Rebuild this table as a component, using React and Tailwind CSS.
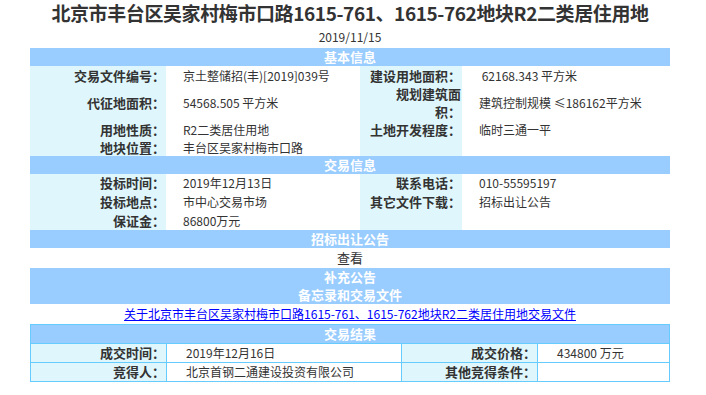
import React from 'react'

const label = 'flex items-center justify-end bg-[#dff7fc] text-[13px] font-bold text-[#333] leading-[18px] text-right pr-[1px]'
const value = 'flex items-center bg-white text-[12px] text-[#333] pl-[17px] whitespace-nowrap'

function Bar({ children, className = '' }) {
  return (
    <div className={`flex h-[18px] items-center justify-center bg-[#99ccff] text-[13px] font-bold text-white ${className}`}>
      {children}
    </div>
  )
}

export default function App() {
  return (
    <div className="min-h-[395px] bg-white pt-[1px] font-['Noto_Sans_CJK_SC',sans-serif] text-[#333]">
      <div className="ml-[30px] w-[640px]">
        <h1 className="h-[25px] text-center text-[19px] leading-[24px] font-bold tracking-[-0.4px] whitespace-nowrap">
          北京市丰台区吴家村梅市口路1615-761、1615-762地块R2二类居住用地
        </h1>
        <p className="h-[22px] pt-[2px] text-center text-[12px] leading-[18px]">2019/11/15</p>

        <Bar>基本信息</Bar>
        <div className="grid grid-cols-[136px_194px_102px_208px] grid-rows-[19px_36px_18px_17px]">
          <div className={label}>交易文件编号：</div>
          <div className={value}>京土整储招(丰)[2019]039号</div>
          <div className={label}>建设用地面积：</div>
          <div className={value}>&nbsp;62168.343 平方米</div>

          <div className={label}>代征地面积：</div>
          <div className={value}>54568.505 平方米</div>
          <div className={label}>
            <span>规划建筑面<br />积：</span>
          </div>
          <div className={value}>建筑控制规模 ≤186162平方米</div>

          <div className={label}>用地性质：</div>
          <div className={value}>R2二类居住用地</div>
          <div className={label}>土地开发程度：</div>
          <div className={value}>临时三通一平</div>

          <div className={label}>地块位置：</div>
          <div className={value}>丰台区吴家村梅市口路</div>
          <div className={label}></div>
          <div className={value}></div>
        </div>

        <Bar>交易信息</Bar>
        <div className="grid grid-cols-[136px_194px_102px_208px] grid-rows-[18px_19px_19px]">
          <div className={label}>投标时间：</div>
          <div className={value}>2019年12月13日</div>
          <div className={label}>联系电话：</div>
          <div className={value}>010-55595197</div>

          <div className={label}>投标地点：</div>
          <div className={value}>市中心交易市场</div>
          <div className={label}>其它文件下载：</div>
          <div className={value}>招标出让公告</div>

          <div className={label}>保证金：</div>
          <div className={value}>86800万元</div>
          <div className={label}></div>
          <div className={value}></div>
        </div>

        <Bar>招标出让公告</Bar>
        <div className="flex h-[20px] items-center justify-center text-[13px]">查看</div>
        <div className="flex h-[36px] flex-col bg-[#99ccff] text-[13px] font-bold text-white">
          <div className="flex h-[18px] items-center justify-center">补充公告</div>
          <div className="flex h-[18px] items-center justify-center">备忘录和交易文件</div>
        </div>
        <div className="flex h-[20px] items-center justify-center">
          <a href="#" className="text-[12px] text-[#0000ff] underline whitespace-nowrap">
            关于北京市丰台区吴家村梅市口路1615-761、1615-762地块R2二类居住用地交易文件
          </a>
        </div>

        <div className="grid grid-cols-[135px_234px_135px_131px] grid-rows-[18px_18px_18px] gap-px bg-[#66ccff] p-px">
          <div className="col-span-4 flex items-center justify-center bg-[#99ccff] text-[13px] font-bold text-white">
            交易结果
          </div>
          <div className={label}>成交时间：</div>
          <div className={`${value} pl-[19px]`}>2019年12月16日</div>
          <div className={label}>成交价格：</div>
          <div className={`${value} pl-[19px]`}>434800 万元</div>

          <div className={label}>竞得人：</div>
          <div className={`${value} pl-[19px]`}>北京首钢二通建设投资有限公司</div>
          <div className={label}>其他竞得条件：</div>
          <div className={value}></div>
        </div>
      </div>
    </div>
  )
}
